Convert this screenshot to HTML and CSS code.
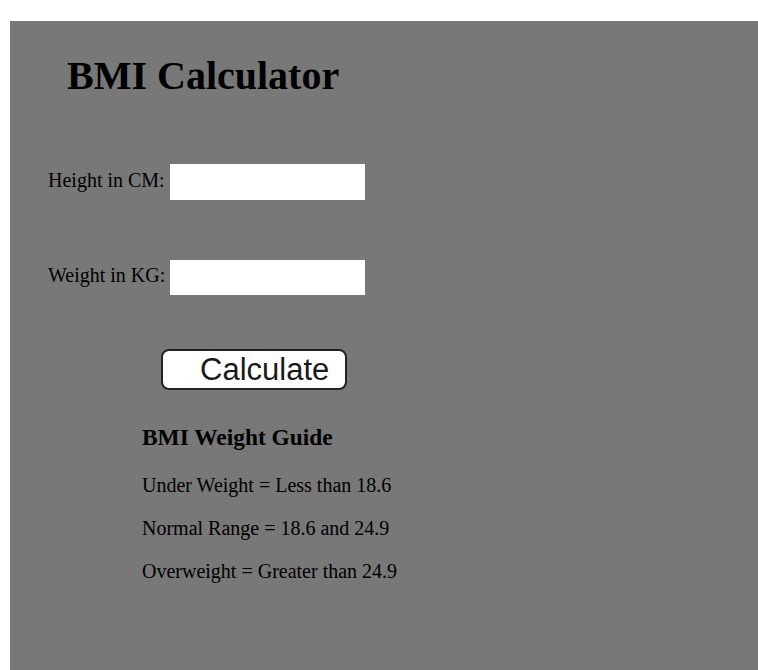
FILE: index.html
```html
<!DOCTYPE html>
<html lang="en">
<head>
<meta charset="utf-8">
<title>BMI Calculator</title>
<link rel="stylesheet" href="styles.css">
</head>
<body>
<div class="page">
  <h1 class="title">BMI Calculator</h1>
  <form class="form">
    <div class="row row-height">
      <label class="label" for="height">Height in CM:</label>
      <input class="field" id="height" type="text">
    </div>
    <div class="row row-weight">
      <label class="label" for="weight">Weight in KG:</label>
      <input class="field" id="weight" type="text">
    </div>
    <button class="calc" type="button">Calculate</button>
  </form>
  <div class="guide">
    <h3 class="guide-title">BMI Weight Guide</h3>
    <p class="guide-line">Under Weight = Less than 18.6</p>
    <p class="guide-line">Normal Range = 18.6 and 24.9</p>
    <p class="guide-line">Overweight = Greater than 24.9</p>
  </div>
</div>
</body>
</html>
```

FILE: styles.css
```css
html, body {
  margin: 0;
  padding: 0;
  background: #ffffff;
}

.page {
  margin: 21px 0 0 10px;
  min-height: 649px;
  background: #787878;
  font-family: "Liberation Serif", "Times New Roman", serif;
  font-size: 20px;
  color: #000;
  padding-top: 32px;
  box-sizing: border-box;
  overflow: hidden;
}

.title {
  margin: 0;
  padding-left: 57px;
  font-size: 40px;
  font-weight: bold;
  line-height: 46px;
}

.form {
  margin: 0;
  padding-left: 38px;
}

.row {
  display: flex;
  align-items: flex-start;
  width: 317px;
}

.row-height {
  margin-top: 65px;
}

.row-weight {
  margin-top: 60px;
}

.label {
  margin-top: 5px;
  white-space: nowrap;
  line-height: 23px;
}

.field {
  flex: 1;
  margin: 0 0 0 5px;
  height: 36px;
  border: none;
  padding: 0;
  background: #ffffff;
  outline: none;
}

.row-weight .field {
  height: 35px;
}

.row-weight .label {
  margin-top: 4px;
}

.calc {
  display: block;
  margin: 54px 0 0 113px;
  width: 186px;
  height: 41px;
  box-sizing: border-box;
  padding: 0 8px 0 37px;
  text-align: left;
  background: #ffffff;
  border: 2px solid #222222;
  border-radius: 8px;
  font-family: "Liberation Sans", Arial, sans-serif;
  font-size: 31px;
  line-height: 35px;
  color: #1a1a1a;
}

.guide {
  padding-left: 132px;
  margin-top: 34px;
}

.guide-title {
  margin: 0;
  font-size: 23.4px;
  font-weight: bold;
  line-height: 26px;
}

.guide-line {
  margin: 24px 0 0 0;
  line-height: 23px;
}

.guide-line + .guide-line {
  margin-top: 20px;
}
```
